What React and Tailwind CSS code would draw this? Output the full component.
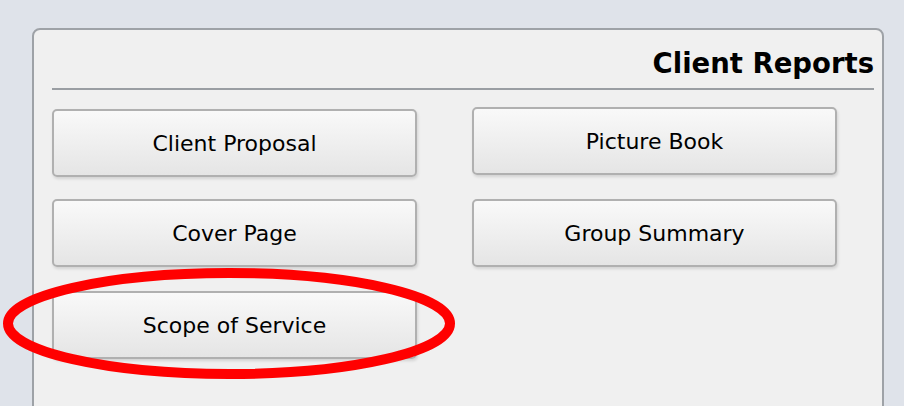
const ReportButton = ({ label, className = "" }) => {
  return (
    <button
      className={`h-[68px] w-[365px] flex items-center justify-center rounded-[5px] border-2 border-[#b0b0b0] bg-gradient-to-b from-[#f9f9f9] to-[#e5e5e5] text-[22px] text-black shadow-[1px_2px_3px_rgba(0,0,0,0.12)] ${className}`}
    >
      {label}
    </button>
  );
};

const App = () => {
  return (
    <div
      className="relative h-[406px] w-full overflow-hidden bg-[#dfe3ea] pt-[28px] pl-[32px] pr-[20px]"
      style={{ fontFamily: '"DejaVu Sans", Verdana, sans-serif' }}
    >
      <div className="h-[420px] rounded-[8px] border-2 border-[#9ea2a7] bg-[#f0f0f0] pt-[17px] pl-[18px] pr-[8px]">
        <h1 className="text-right text-[27.5px] font-bold leading-[32px] text-black">Client Reports</h1>
        <div className="mt-[9px] h-[2px] bg-[#9a9ea3]" />
        <div className="mt-[19px] grid grid-cols-[365px_365px] gap-x-[55px] gap-y-[22px]">
          <ReportButton label="Client Proposal" />
          <ReportButton label="Picture Book" className="-mt-[2px]" />
          <ReportButton label="Cover Page" />
          <ReportButton label="Group Summary" />
          <ReportButton label="Scope of Service" className="mt-[2px]" />
        </div>
      </div>

      {/* red highlight ring */}
      <svg className="absolute left-0 top-[268px]" width="460" height="115" viewBox="0 0 460 115">
        <ellipse cx="229" cy="55.5" rx="221" ry="50.5" fill="none" stroke="#ff0000" strokeWidth="10" />
      </svg>
    </div>
  );
};

export default App;
